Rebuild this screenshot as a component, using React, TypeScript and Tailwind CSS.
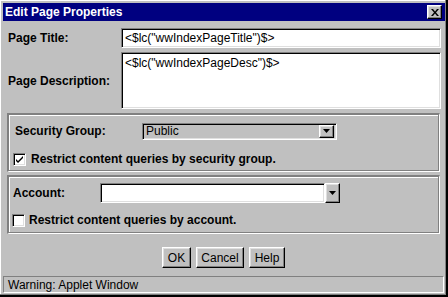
import React from "react";

const font = { fontFamily: '"Liberation Sans", Arial, sans-serif' };

function Sunken({ className = "", children }: { className?: string; children?: React.ReactNode }) {
  return (
    <div
      className={`border border-t-[#808080] border-l-[#808080] border-b-white border-r-white shadow-[inset_1px_1px_0_#000,inset_-1px_-1px_0_#dfdfdf] ${className}`}
    >
      {children}
    </div>
  );
}

function Raised({ className = "", children }: { className?: string; children?: React.ReactNode }) {
  return (
    <div
      className={`border border-t-white border-l-white border-b-black border-r-black shadow-[inset_-1px_-1px_0_#808080,inset_1px_1px_0_#dfdfdf] bg-[#c0c0c0] ${className}`}
    >
      {children}
    </div>
  );
}

function DropBtn({ className = "" }: { className?: string }) {
  return (
    <Raised className={`flex items-center justify-center ${className}`}>
      <svg width="7" height="4" viewBox="0 0 7 4">
        <path d="M0 0h7L3.5 4z" fill="#000" />
      </svg>
    </Raised>
  );
}

function Check({ checked }: { checked?: boolean }) {
  return (
    <Sunken className="w-[13px] h-[13px] bg-white flex items-center justify-center shrink-0">
      {checked && (
        <svg width="9" height="9" viewBox="0 0 9 9">
          <path d="M1 4l2 2 5-5v2l-5 5-2-2z" fill="#000" />
        </svg>
      )}
    </Sunken>
  );
}

export default function App() {
  return (
    <div
      style={font}
      className="w-[448px] h-[297px] bg-[#c0c0c0] border-r-2 border-b-2 border-r-black border-b-black shadow-[inset_-1px_-1px_0_#808080,inset_1px_1px_0_#fff] pt-[3px] pl-[3px] pr-[1px] flex flex-col text-black"
    >
      {/* title bar */}
      <div className="h-[18px] bg-[#000080] flex items-center justify-between pl-[2px] pr-[3px]">
        <span className="text-white font-bold text-[12px] leading-none">Edit Page Properties</span>
        <Raised className="w-[15px] h-[14px] flex items-center justify-center">
          <svg width="8" height="7" viewBox="0 0 8 7">
            <path d="M0 0h2l2 2.5L6 0h2L5 3.5 8 7H6L4 4.5 2 7H0l3-3.5z" fill="#000" />
          </svg>
        </Raised>
      </div>

      {/* page title */}
      <div className="mt-[7px] flex items-center pl-[5px] pr-[4px]">
        <div className="w-[113px] font-bold text-[12px]">Page Title:</div>
        <Sunken className="flex-1 h-[20px] bg-white flex items-center pl-[3px] text-[12px]">
          {'<$lc("wwIndexPageTitle")$>'}
        </Sunken>
      </div>

      {/* page description */}
      <div className="mt-[4px] flex items-center pl-[5px] pr-[4px]">
        <div className="w-[113px] font-bold text-[12px]">Page Description:</div>
        <Sunken className="flex-1 h-[57px] bg-white pl-[3px] pt-[1px] text-[12px]">
          {'<$lc("wwIndexPageDesc")$>'}
        </Sunken>
      </div>

      {/* security group panel */}
      <div className="mt-[4px] ml-[4px] mr-[5px] h-[59px] border-t-2 border-l-2 border-t-[#808080] border-l-[#808080] border-b border-r border-b-white border-r-white shadow-[inset_-1px_-1px_0_#808080,inset_1px_1px_0_#fff] pt-[7px] pl-[6px]">
        <div className="flex items-center">
          <div className="w-[127px] font-bold text-[12px]">Security Group:</div>
          <Sunken className="w-[195px] h-[17px] bg-[#c0c0c0] flex items-center justify-between pl-[3px] pr-[2px] text-[12px]">
            <span>Public</span>
            <DropBtn className="w-[15px] h-[13px]" />
          </Sunken>
        </div>
        <div className="mt-[10px] flex items-center gap-[5px] -ml-[2px]">
          <Check checked />
          <span className="font-bold text-[12px]">Restrict content queries by security group.</span>
        </div>
      </div>

      {/* account panel */}
      <div className="mt-[3px] ml-[4px] mr-[5px] h-[59px] border-t-2 border-l-2 border-t-[#808080] border-l-[#808080] border-b border-r border-b-white border-r-white shadow-[inset_-1px_-1px_0_#808080,inset_1px_1px_0_#fff] pt-[6px] pl-[4px]">
        <div className="flex items-center">
          <div className="w-[87px] font-bold text-[12px]">Account:</div>
          <Sunken className="w-[225px] h-[20px] bg-white" />
          <DropBtn className="w-[15px] h-[20px]" />
        </div>
        <div className="mt-[8px] flex items-center gap-[4px] -ml-[1px]">
          <Check />
          <span className="font-bold text-[12px]">Restrict content queries by account.</span>
        </div>
      </div>

      {/* buttons */}
      <div className="mt-[13px] flex justify-center gap-[5px] pr-[1px]">
        <Raised className="w-[29px] h-[21px] flex items-center justify-center text-[12px]">OK</Raised>
        <Raised className="w-[48px] h-[21px] flex items-center justify-center text-[12px]">Cancel</Raised>
        <Raised className="w-[36px] h-[21px] flex items-center justify-center text-[12px]">Help</Raised>
      </div>

      {/* status bar */}
      <div className="mt-[8px] mr-[1px] h-[17px] border border-t-[#808080] border-l-[#808080] border-b-white border-r-white flex items-center pl-[4px] text-[12px]">
        Warning: Applet Window
      </div>
    </div>
  );
}
